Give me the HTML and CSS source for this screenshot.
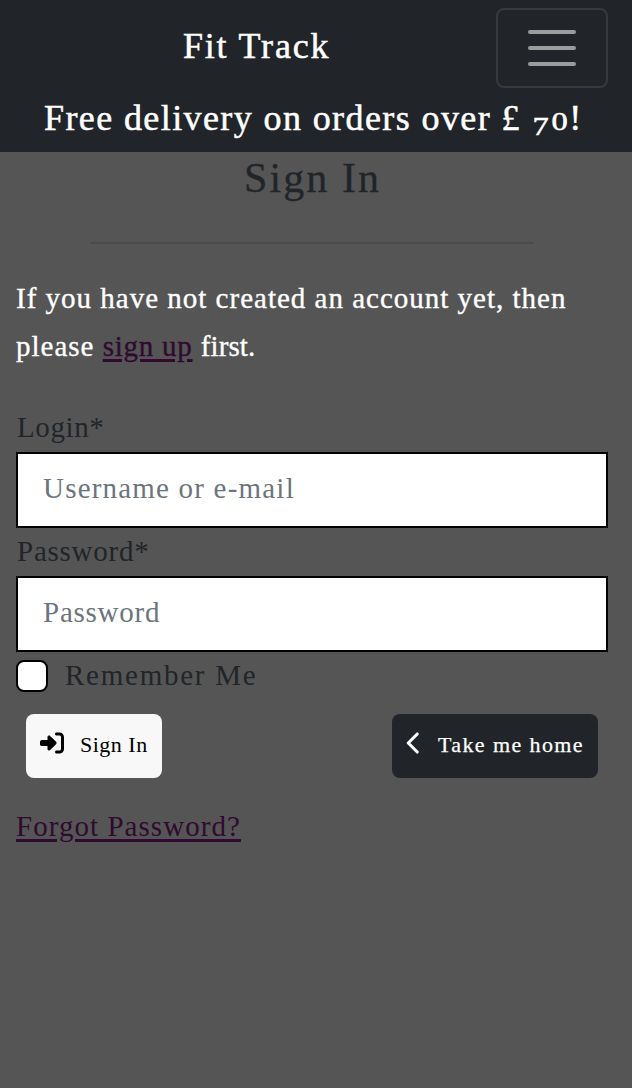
FILE: index.html
```html
<!DOCTYPE html>
<html lang="en">
<head>
<meta charset="utf-8">
<title>Fit Track - Sign In</title>
<link rel="stylesheet" href="styles.css">
</head>
<body>
<header class="site-header">
  <div class="navbar">
    <div class="brand">Fit Track</div>
    <button class="toggler" type="button" aria-label="Toggle navigation">
      <svg width="60" height="60" viewBox="0 0 30 30" fill="none" stroke="#fff" stroke-opacity=".55" stroke-width="2" stroke-linecap="round"><path d="M4 7h22M4 15h22M4 23h22"/></svg>
    </button>
  </div>
  <div class="banner">Free delivery on orders over £ <span class="old seven">7</span><span class="old">0</span>!</div>
</header>
<main class="content">
  <h1 class="title">Sign In</h1>
  <hr class="rule">
  <p class="intro">If you have not created an account yet, then<br>please <a class="link signup" href="#">sign up</a> <span class="first">first.</span></p>
  <form class="form">
    <label class="label login" for="login">Login*</label>
    <input class="field user" id="login" type="text" placeholder="Username or e-mail">
    <label class="label" for="password">Password*</label>
    <input class="field" id="password" type="password" placeholder="Password">
    <div class="remember">
      <input class="check" id="remember" type="checkbox">
      <label class="remember-label" for="remember">Remember Me</label>
    </div>
    <div class="actions">
      <button class="btn btn-light" type="button">
        <svg class="icon" width="24" height="24" viewBox="0 0 512 512"><path fill="currentColor" d="M352 96h64c17.700 0 32 14.300 32 32v256c0 17.700-14.300 32-32 32h-64c-17.700 0-32 14.300-32 32s14.300 32 32 32h64c53 0 96-43 96-96V128c0-53-43-96-96-96h-64c-17.700 0-32 14.300-32 32s14.300 32 32 32z"/><path fill="currentColor" d="M217 105 343 231q25 25 0 50L217 407c-18 18-57 8-57-23v-64H40c-22 0-40-18-40-40v-48c0-22 18-40 40-40h120v-64c0-31 39-41 57-23z"/></svg>
        <span class="sign-text">Sign In</span>
      </button>
      <button class="btn btn-dark" type="button">
        <svg class="icon" width="15" height="24" viewBox="0 0 320 512"><path fill="none" stroke="currentColor" stroke-width="66" stroke-linecap="round" stroke-linejoin="round" d="M240 64 48 256l192 192"/></svg>
        <span class="home-text">Take me home</span>
      </button>
    </div>
    <a class="link forgot" href="#">Forgot Password?</a>
  </form>
</main>
</body>
</html>
```

FILE: styles.css
```css
* { box-sizing: border-box; }
body {
  margin: 0;
  min-height: 1088px;
  background: #555;
  color: #212529;
  font: 29px/48px "Liberation Serif", "Times New Roman", serif;
}
input, button { font-family: inherit; }
.site-header {
  height: 152px;
  padding-top: 8px;
  background: #212529;
  color: #fff;
  font-size: 36px;
  -webkit-text-stroke: .5px;
}
.navbar {
  display: flex;
  height: 80px;
  padding: 0 24px 0 183px;
  justify-content: space-between;
}
.brand { padding-top: 14px; letter-spacing: 1.8px; }
.toggler {
  display: flex;
  width: 112px;
  height: 80px;
  padding: 0;
  align-items: center;
  justify-content: center;
  border: 2px solid #373a3e;
  border-radius: 8px;
  background: none;
}
.banner { padding: 6px 0 0 44px; letter-spacing: 1.4px; white-space: nowrap; }
.old { display: inline-block; width: 19px; font-size: 26px; line-height: 1; letter-spacing: 0; text-align: center; transform: scaleX(1.25); }
.seven { vertical-align: -5px; }
.content { padding: 0 24px 0 16px; }
.title {
  margin: 0 0 0 228px;
  height: 90px;
  padding-top: 2px;
  font-size: 42px;
  font-weight: 400;
  letter-spacing: 2.1px;
  -webkit-text-stroke: .3px;
}
.rule { width: 444px; height: 2px; margin: 0 0 0 74px; border: 0; background: #4a4b4c; }
.intro {
  margin: 30px 0 32px;
  color: #fff;
  letter-spacing: 1px;
  white-space: nowrap;
  -webkit-text-stroke: .35px;
}
.link { color: #300a30; text-decoration: underline; text-decoration-thickness: 3px; text-underline-offset: 3px; }
.signup { letter-spacing: .75px; }
.first { letter-spacing: .1px; }
.form { display: flex; flex-direction: column; padding-top: 2px; }
.label { height: 48px; margin-top: -1px; padding-left: 1px; border-bottom: 1px solid transparent; letter-spacing: .75px; box-sizing: content-box; }
.login { letter-spacing: .6px; }
.field {
  width: 100%;
  height: 76px;
  padding: 0 24px 3px 25px;
  border: 2px solid #000;
  border-radius: 0;
  background: #fff;
  font-size: 29px;
  letter-spacing: .75px;
}
.field::placeholder { color: #6c757d; opacity: 1; }
.user { letter-spacing: 1.2px; }
.remember { display: flex; height: 48px; gap: 17px; align-items: center; }
.check {
  width: 32px;
  height: 32px;
  margin: 0;
  appearance: none;
  border: 2px solid #000;
  border-radius: 8px;
  background: #fff;
}
.remember-label { padding-bottom: 2px; letter-spacing: 1.75px; }
.actions { display: flex; justify-content: space-between; padding: 14px 10px 24px; }
.btn {
  display: flex;
  height: 64px;
  padding: 0 14px;
  align-items: center;
  border: 0;
  border-radius: 8px;
  font-size: 22px;
  white-space: nowrap;
}
.btn-light { width: 136px; gap: 16px; background: #f8f8f8; color: #000; }
.btn-dark { width: 206px; gap: 17px; background: #212529; color: #fff; -webkit-text-stroke: .25px; }
.icon { flex: none; margin-bottom: 6px; }
.sign-text { padding-bottom: 2px; letter-spacing: .5px; }
.home-text { padding-bottom: 2px; letter-spacing: 1.4px; }
.forgot { align-self: flex-start; letter-spacing: 1.05px; }
```
